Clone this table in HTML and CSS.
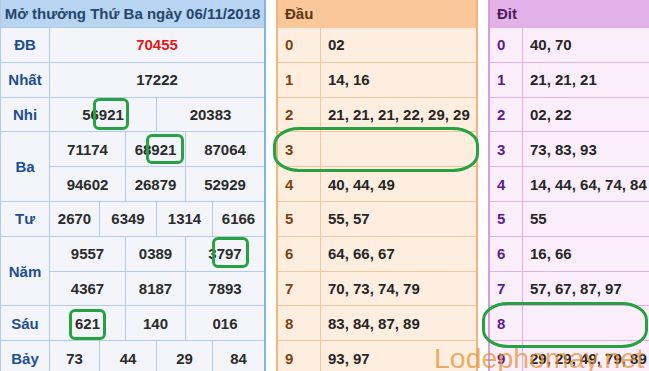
FILE: index.html
```html
<!DOCTYPE html>
<html lang="vi">
<head>
<meta charset="utf-8">
<title>Kết quả xổ số</title>
<link rel="stylesheet" href="styles.css">
</head>
<body>
<div class="page">
  <div class="kq">
    <div class="kq-head">Mở thưởng Thứ Ba ngày 06/11/2018</div>

    <div class="lbl">ĐB</div>
    <div class="num red s6">70455</div>

    <div class="lbl">Nhất</div>
    <div class="num s6">17222</div>

    <div class="lbl">Nhi</div>
    <div class="num s3">56921</div>
    <div class="num s3">20383</div>

    <div class="lbl r2">Ba</div>
    <div class="num s2">71174</div>
    <div class="num s2">68921</div>
    <div class="num s2">87064</div>
    <div class="num s2">94602</div>
    <div class="num s2">26879</div>
    <div class="num s2">52929</div>

    <div class="lbl">Tư</div>
    <div class="num s1">2670</div>
    <div class="num s2">6349</div>
    <div class="num s2">1314</div>
    <div class="num s1">6166</div>

    <div class="lbl r2">Năm</div>
    <div class="num s2">9557</div>
    <div class="num s2">0389</div>
    <div class="num s2">3797</div>
    <div class="num s2">4367</div>
    <div class="num s2">8187</div>
    <div class="num s2">7893</div>

    <div class="lbl">Sáu</div>
    <div class="num s2">621</div>
    <div class="num s2">140</div>
    <div class="num s2">016</div>

    <div class="lbl">Bảy</div>
    <div class="num s1">73</div>
    <div class="num s2">44</div>
    <div class="num s2">29</div>
    <div class="num s1">84</div>
  </div>

  <div class="lt dau">
    <div class="hd">Đầu</div><div class="hd"></div>
    <div class="k">0</div><div class="v">02</div>
    <div class="k">1</div><div class="v">14, 16</div>
    <div class="k">2</div><div class="v">21, 21, 21, 22, 29, 29</div>
    <div class="k">3</div><div class="v"></div>
    <div class="k">4</div><div class="v">40, 44, 49</div>
    <div class="k">5</div><div class="v">55, 57</div>
    <div class="k">6</div><div class="v">64, 66, 67</div>
    <div class="k">7</div><div class="v">70, 73, 74, 79</div>
    <div class="k">8</div><div class="v">83, 84, 87, 89</div>
    <div class="k">9</div><div class="v">93, 97</div>
  </div>

  <div class="lt dit">
    <div class="hd">Đit</div><div class="hd"></div>
    <div class="k">0</div><div class="v">40, 70</div>
    <div class="k">1</div><div class="v">21, 21, 21</div>
    <div class="k">2</div><div class="v">02, 22</div>
    <div class="k">3</div><div class="v">73, 83, 93</div>
    <div class="k">4</div><div class="v">14, 44, 64, 74, 84</div>
    <div class="k">5</div><div class="v">55</div>
    <div class="k">6</div><div class="v">16, 66</div>
    <div class="k">7</div><div class="v">57, 67, 87, 97</div>
    <div class="k">8</div><div class="v"></div>
    <div class="k">9</div><div class="v">29, 29, 49, 79, 89</div>
  </div>

  <div class="mark box b-nhi"></div>
  <div class="mark box b-ba"></div>
  <div class="mark box b-nam"></div>
  <div class="mark box b-sau"></div>
  <div class="mark oval o-dau"></div>
  <div class="mark oval o-dit"></div>

  <div class="watermark">Lodephomay.net</div>
</div>
</body>
</html>
```

FILE: styles.css
```css
* { box-sizing: border-box; }

html, body {
  margin: 0;
  padding: 0;
  background: #ffffff;
  overflow: hidden;
}

.page {
  position: relative;
  width: 649px;
  height: 371px;
  overflow: hidden;
  display: flex;
  align-items: flex-start;
  gap: 10px;
  font-family: "Liberation Sans", Arial, sans-serif;
  font-weight: bold;
  font-size: 15px;
}

/* ---------- left results table ---------- */
.kq {
  flex: 0 0 266px;
  width: 266px;
  display: grid;
  grid-template-columns: 48px 49px 25px 30px 28px 26px 51px;
  grid-template-rows: 27px repeat(10, 33.8px);
  gap: 1px;
  background: #b3cbea;
  border-left: 1px solid #b3cbea;
  border-right: 2px solid #86b2e6;
}

.kq-head {
  grid-column: 1 / -1;
  background: #b7d4f2;
  color: #24466c;
  display: flex;
  align-items: center;
  justify-content: center;
  white-space: nowrap;
}

.lbl {
  grid-column: 1;
  background: #f3f5fa;
  color: #1d4f8f;
  display: flex;
  align-items: center;
  justify-content: center;
}
.lbl.r2 { grid-row: span 2; }

.num {
  background: #f3f5fa;
  color: #2b2b2b;
  display: flex;
  align-items: center;
  justify-content: center;
}
.num.red { color: #e01b1b; }
.s1 { grid-column: span 1; }
.s2 { grid-column: span 2; }
.s3 { grid-column: span 3; }
.s6 { grid-column: span 6; }

/* ---------- loto tables ---------- */
.lt {
  display: grid;
  grid-template-rows: 27px repeat(10, 33.8px);
  gap: 1px;
}

.lt .hd,
.lt .k,
.lt .v {
  display: flex;
  align-items: center;
  white-space: nowrap;
}
.lt .hd { padding-left: 7px; }
.lt .k { padding-left: 7px; }
.lt .v { padding-left: 7px; color: #262626; }

.dau {
  flex: 0 0 202px;
  width: 202px;
  grid-template-columns: 42px 1fr;
  background: #f3c7a0;
  border-left: 2px solid #f5b47c;
  border-right: 2px solid #f5b47c;
}
.dau .hd { background: #fac898; color: #5c3515; }
.dau .k { background: #fdeee0; color: #7c4212; }
.dau .v { background: #fdeee0; }

.dit {
  flex: 0 0 175px;
  width: 175px;
  grid-template-columns: 32px 1fr;
  background: #ddb0e6;
  border-left: 2px solid #d79ce2;
}
.dit .hd { background: #e3b0ea; color: #4b1f5e; }
.dit .k { background: #fbeefb; color: #5d1b8f; }
.dit .v { background: #fbeefb; }

/* ---------- green annotation marks ---------- */
.mark {
  position: absolute;
  border: 3px solid #27a243;
  pointer-events: none;
}
.box { border-radius: 6px; }
.b-nhi { left: 93px;  top: 98px;  width: 36px; height: 32px; }
.b-ba  { left: 146px; top: 134px; width: 38px; height: 30px; }
.b-nam { left: 212px; top: 237px; width: 37px; height: 31px; }
.b-sau { left: 69px;  top: 309px; width: 37px; height: 31px; }

.oval { border-radius: 26px / 18px; }
.o-dau { left: 273px; top: 127px; width: 206px; height: 45px; }
.o-dit { left: 482px; top: 302px; width: 166px; height: 46px; }

/* ---------- watermark ---------- */
.watermark {
  position: absolute;
  left: 434px;
  top: 340px;
  font-family: "Liberation Sans", Arial, sans-serif;
  font-weight: normal;
  font-size: 28.5px;
  line-height: 36px;
  color: rgba(228, 146, 50, 0.72);
  white-space: nowrap;
  pointer-events: none;
}
```
